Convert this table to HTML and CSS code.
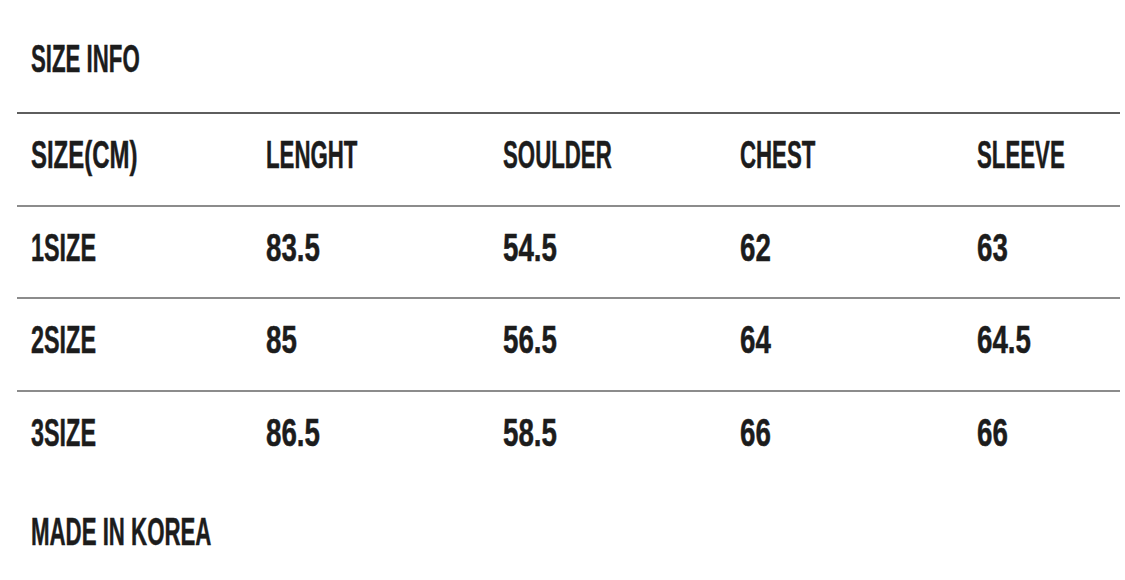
FILE: index.html
```html
<!DOCTYPE html>
<html lang="en">
<head>
<meta charset="utf-8">
<title>Size Info</title>
<link rel="stylesheet" href="styles.css">
</head>
<body>
<div class="page">
  <h1 class="title"><span class="txt w">SIZE INFO</span></h1>
  <div class="table">
    <div class="row head">
      <div class="cell"><span class="txt w-cm">SIZE(CM)</span></div>
      <div class="cell"><span class="txt w">LENGHT</span></div>
      <div class="cell"><span class="txt w">SOULDER</span></div>
      <div class="cell"><span class="txt w">CHEST</span></div>
      <div class="cell"><span class="txt w">SLEEVE</span></div>
    </div>
    <div class="row">
      <div class="cell"><span class="txt s">1SIZE</span></div>
      <div class="cell"><span class="txt n">83.5</span></div>
      <div class="cell"><span class="txt n">54.5</span></div>
      <div class="cell"><span class="txt n">62</span></div>
      <div class="cell"><span class="txt n">63</span></div>
    </div>
    <div class="row">
      <div class="cell"><span class="txt s">2SIZE</span></div>
      <div class="cell"><span class="txt n">85</span></div>
      <div class="cell"><span class="txt n">56.5</span></div>
      <div class="cell"><span class="txt n">64</span></div>
      <div class="cell"><span class="txt n">64.5</span></div>
    </div>
    <div class="row">
      <div class="cell"><span class="txt s">3SIZE</span></div>
      <div class="cell"><span class="txt n">86.5</span></div>
      <div class="cell"><span class="txt n">58.5</span></div>
      <div class="cell"><span class="txt n">66</span></div>
      <div class="cell"><span class="txt n">66</span></div>
    </div>
  </div>
  <p class="footer"><span class="txt w">MADE IN KOREA</span></p>
</div>
</body>
</html>
```

FILE: styles.css
```css
html, body {
  margin: 0;
  padding: 0;
  background: #ffffff;
}

.page {
  padding: 39px 5px 0 17px;
  font-family: "Liberation Sans", Arial, sans-serif;
  font-weight: 700;
  font-size: 39.5px;
  line-height: 38px;
  color: #1c1c1c;
}

.title {
  margin: 0 0 35px 0;
  padding-left: 14px;
  font-size: 39.5px;
  line-height: 38px;
  font-weight: 700;
  height: 38px;
}

.txt {
  display: inline-block;
  white-space: nowrap;
  transform-origin: 0 50%;
  -webkit-text-stroke: 0.5px #1c1c1c;
}

.w { transform: scaleX(0.563); }
.w-cm { transform: scaleX(0.606); }
.s { transform: scaleX(0.592); }
.n { transform: scaleX(0.702); }

.table {
  display: flex;
  flex-direction: column;
}

.row {
  box-sizing: border-box;
  height: 92.5px;
  border-top: 2px solid #8c8c8c;
  padding: 21px 0 0 14px;
  display: grid;
  grid-template-columns: 235px 237px 237px 237px 1fr;
  align-items: start;
}

.row.head {
  border-top-color: #5e5e5e;
}

.cell {
  height: 38px;
}

.footer {
  margin: 30px 0 0 0;
  padding-left: 14px;
  height: 38px;
}
```
